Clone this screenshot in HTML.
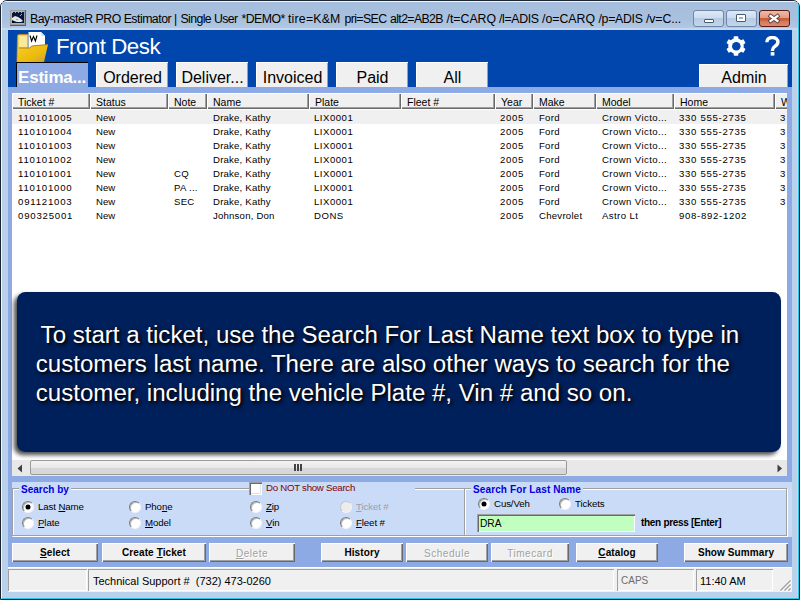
<!DOCTYPE html>
<html><head><meta charset="utf-8">
<style>
*{box-sizing:border-box;margin:0;padding:0}
html,body{width:800px;height:600px;overflow:hidden;background:#fff}
body{position:relative;font-family:"Liberation Sans",sans-serif;font-size:11px;color:#000}
.a{position:absolute}
.u{text-decoration:underline}
.tb{position:absolute;top:62px;height:25px;background:#f0f0f0;border-top:1px solid #fff;border-left:1px solid #fff;box-shadow:inset -1px 0 0 #a0a0a0;font-size:16px;line-height:24px;text-align:center;white-space:nowrap;color:#000}
.tbt{position:absolute;top:66px;font-size:16px;line-height:20px;white-space:nowrap;color:#000}
.hc{position:absolute;top:0;height:16px;background:#f0f0f0;box-shadow:inset 1px 1px 0 #fff,inset -1px -1px 0 #696969,inset -2px -2px 0 #a0a0a0;font-size:10.5px;line-height:16px;padding-top:1px;padding-left:6px;white-space:nowrap;overflow:hidden}
.c{position:absolute;font-size:9.6px;line-height:15px;white-space:nowrap}
.gb{position:absolute;border:1px solid #a0a0a0;box-shadow:1px 1px 0 #fff, inset 1px 1px 0 #fff}
.rd{position:absolute;width:12px;height:12px;border-radius:50%;background:#fff;border:1px solid;border-color:#7c7c7c #f4f4f4 #f4f4f4 #7c7c7c;box-shadow:inset 1px 1px 0 #b8b8b8}
.rd.on::after{content:"";position:absolute;left:3px;top:3px;width:4px;height:4px;border-radius:50%;background:#000;box-shadow:0 0 0 0.5px #000}
.rd.dis{background:#ececec;border-color:#c4c4c4 #f4f4f4 #f4f4f4 #c4c4c4;box-shadow:none}
.lb{position:absolute;font-size:9.7px;line-height:14px;white-space:nowrap;letter-spacing:-0.12px}
.btn{position:absolute;top:543px;height:19px;background:#f0f0f0;box-shadow:inset 1px 1px 0 #fff,inset -1px -1px 0 #696969,inset -2px -2px 0 #a0a0a0;font-size:10px;line-height:19px;text-align:center;font-weight:bold;white-space:nowrap;letter-spacing:0.1px}
.btn.dis{color:#a0a0a0;font-weight:normal;font-size:10px;letter-spacing:0.55px;line-height:19px;padding-top:1px;text-shadow:1px 1px 0 #fff}
.sp{position:absolute;top:569px;height:22px;box-shadow:inset 1px 1px 0 #a0a0a0,inset -1px -1px 0 #fff}
.st{position:absolute;top:574px;font-size:11px;line-height:14px;white-space:nowrap}
</style></head><body>
<div class="a" style="left:0;top:0;width:800px;height:600px;background:#b9d1ea;border:1px solid #1c2430;border-radius:7px 7px 0 0"></div>
<div class="a" style="left:1px;top:1px;width:798px;height:598px;border-top:1px solid #f2f6fb;border-left:1px solid #f2f6fb;border-right:1px solid #2ec6e6;border-bottom:1px solid #2ec6e6;border-radius:6px 6px 0 0"></div>
<div class="a" style="left:2px;top:2px;width:796px;height:26px;background:linear-gradient(#a6bedd,#a9c1df 70%,#b2c8e4)"></div>
<div class="a" style="left:2px;top:28px;width:796px;height:2px;background:#c6d8ee"></div>
<div class="a" style="left:797px;top:30px;width:1px;height:567px;background:#ccd6ee"></div>
<svg class="a" style="left:10px;top:10px" width="16" height="16" viewBox="0 0 16 16" shape-rendering="crispEdges">
<rect x="0" y="0" width="16" height="16" fill="#5e5e5e"/>
<rect x="0" y="0" width="15" height="15" fill="#9c9c9c"/>
<rect x="1" y="1" width="13" height="13" fill="#b4b4b4"/>
<rect x="2" y="3" width="12" height="10" fill="#06163c"/>
<rect x="3" y="2" width="2" height="1" fill="#06163c"/><rect x="6" y="2" width="2" height="1" fill="#06163c"/><rect x="9" y="2" width="2" height="1" fill="#06163c"/><rect x="12" y="2" width="2" height="1" fill="#06163c"/>
<path d="M2 8 L5 6 L8 7 L11 9 L13 11 L11 12 L7 12 L4 11 L2 10Z" fill="#e6e6e6" shape-rendering="auto"/>
<rect x="6" y="9" width="2" height="1" fill="#70c070"/>
<rect x="10" y="5" width="1" height="1" fill="#e0a020"/><rect x="11" y="4" width="1" height="1" fill="#e0a020"/>
<rect x="2" y="11" width="2" height="2" fill="#000"/>
</svg>
<style>.tt{position:absolute;top:11px;font-size:12.3px;line-height:16px;white-space:pre;color:#000}</style>
<div class="tt" style="left:30px;letter-spacing:-0.5px">Bay-masteR PRO Estimator |</div>
<div class="tt" style="left:180.5px;letter-spacing:-0.6px">Single User</div>
<div class="tt" style="left:241.5px;letter-spacing:-0.55px">*DEMO*</div>
<div class="tt" style="left:288px;letter-spacing:0.2px">tire=K&amp;M</div>
<div class="tt" style="left:344.5px;letter-spacing:-0.6px">pri=SEC</div>
<div class="tt" style="left:390px;letter-spacing:-0.62px">alt2=AB2B</div>
<div class="tt" style="left:446.5px;letter-spacing:0px">/t=CARQ</div>
<div class="tt" style="left:499px;letter-spacing:-0.35px">/l=ADIS</div>
<div class="tt" style="left:542px;letter-spacing:0px">/o=CARQ</div>
<div class="tt" style="left:598.5px;letter-spacing:-0.3px">/p=ADIS</div>
<div class="tt" style="left:646px;letter-spacing:-0.12px">/v=C...</div>

<div class="a" style="left:693px;top:10px;width:31px;height:17px;border:1px solid #6f86a6;border-radius:3px;background:linear-gradient(#dfe9f5,#cddcee 45%,#b6cbe4 50%,#c2d5ea)"></div>
<div class="a" style="left:704px;top:19px;width:10px;height:4px;background:#fff;border:1px solid #4a5a70;border-radius:1px"></div>
<div class="a" style="left:726px;top:10px;width:31px;height:17px;border:1px solid #6f86a6;border-radius:3px;background:linear-gradient(#dfe9f5,#cddcee 45%,#b6cbe4 50%,#c2d5ea)"></div>
<div class="a" style="left:736px;top:14px;width:10px;height:8px;background:#fff;border:1px solid #4a5a70;border-radius:1px"></div>
<div class="a" style="left:739px;top:17px;width:4px;height:2px;background:#9ab0cc"></div>
<div class="a" style="left:759px;top:10px;width:31px;height:17px;border:1px solid #5a1a14;border-radius:3px;background:linear-gradient(#f2b8a8,#e49a86 45%,#c85e34 50%,#c8623c 62%,#d4785c 70%,#dc8a70)"></div>
<svg class="a" style="left:767px;top:13px" width="14" height="11" viewBox="0 0 14 11">
<path d="M3.5 3 L10.5 8 M10.5 3 L3.5 8" stroke="#5a4040" stroke-width="4" stroke-linecap="square"/>
<path d="M3.5 3 L10.5 8 M10.5 3 L3.5 8" stroke="#fff" stroke-width="2.2" stroke-linecap="square"/>
</svg>
<div class="a" style="left:8px;top:30px;width:784px;height:57px;background:#0046ad"></div>
<svg class="a" style="left:16px;top:31px" width="34" height="32" viewBox="0 0 34 32">
<defs><linearGradient id="fl" x1="0" y1="0" x2="1" y2="1"><stop offset="0" stop-color="#f6cc2a"/><stop offset="0.6" stop-color="#eebb0c"/><stop offset="1" stop-color="#c9a040"/></linearGradient></defs>
<path d="M1.5 4.5 L3 3.5 L12 3.5 L12 31 L1 31 Z" fill="#f0cf50" stroke="#d09020" stroke-width="0.8"/>
<path d="M3 5 L11 5 L11 16 L3 16Z" fill="#fbe89a"/>
<path d="M12.5 1 L25 1 L29 5 L29 18 L12.5 18Z" fill="#fff"/>
<path d="M25 1 L25 5 L29 5Z" fill="#cfe8f8"/>
<path d="M14 4.5 L15.6 10 L17.5 5.5 L19.4 10 L21 4.5" stroke="#000" stroke-width="1.1" fill="none"/>
<path d="M3 17 L14 17 L15.5 15 L32 13.5 L28 31 L1.5 31Z" fill="url(#fl)"/>
<path d="M3 17 L14 17 L15.5 15 L32 13.5" stroke="#b07818" stroke-width="0.9" fill="none"/>
</svg>
<div class="a" style="left:56px;top:35px;font-size:22.3px;line-height:24px;color:#fff;white-space:nowrap;letter-spacing:-0.5px">Front Desk</div>
<svg class="a" style="left:726px;top:36px" width="20" height="20" viewBox="0 0 20 20">
<g fill="#fff" transform="translate(10,10)">
<circle r="7.8"/>
<rect x="-2.3" y="-9.8" width="4.6" height="19.6" rx="0.8"/>
<rect x="-2.3" y="-9.8" width="4.6" height="19.6" rx="0.8" transform="rotate(60)"/>
<rect x="-2.3" y="-9.8" width="4.6" height="19.6" rx="0.8" transform="rotate(120)"/>
</g>
<circle cx="10.3" cy="10.3" r="4.3" fill="#0046ad"/>
</svg>
<svg class="a" style="left:765px;top:36px" width="15" height="20" viewBox="0 0 15 20">
<path d="M1.8 6.2 C1.8 2.9 4.2 1.5 7.3 1.5 C10.6 1.5 12.9 3.3 12.9 6 C12.9 8.4 11.4 9.5 9.6 10.7 C8.1 11.7 7.5 12.5 7.5 14.2 L7.5 15" stroke="#fff" stroke-width="3.4" fill="none"/>
<rect x="5.7" y="16.1" width="3.7" height="3.5" fill="#fff"/>
</svg>
<div class="a" style="left:8px;top:87px;width:784px;height:480px;background:#8eaae4"></div>
<div class="a" style="left:16px;top:62px;width:72px;height:25px;background:#8eaae4;border-top:1px solid #000;border-left:1px solid #000"></div>
<div class="a" style="left:18px;top:68px;font-size:17px;line-height:20px;font-weight:bold;color:#fff;white-space:nowrap;letter-spacing:-0.2px">Estima...</div>
<div class="tb" style="left:96px;width:72px;top:62px;height:25px;line-height:24px;padding-top:3px">Ordered</div>
<div class="tb" style="left:176px;width:72px;top:62px;height:25px;line-height:24px;padding-top:3px">Deliver...</div>
<div class="tb" style="left:256px;width:72px;top:62px;height:25px;line-height:24px;padding-top:3px">Invoiced</div>
<div class="tb" style="left:336px;width:72px;top:62px;height:25px;line-height:24px;padding-top:3px">Paid</div>
<div class="tb" style="left:416px;width:72px;top:62px;height:25px;line-height:24px;padding-top:3px">All</div>
<div class="tb" style="left:699px;width:89px;top:64px;height:23px;line-height:22px;padding-top:2px">Admin</div>
<div class="a" style="left:12px;top:93px;width:775px;height:383px;background:#fff;overflow:hidden">
<div class="hc" style="left:0px;width:78px">Ticket #</div>
<div class="hc" style="left:78px;width:78px">Status</div>
<div class="hc" style="left:156px;width:39px">Note</div>
<div class="hc" style="left:195px;width:102px">Name</div>
<div class="hc" style="left:297px;width:92px">Plate</div>
<div class="hc" style="left:389px;width:94px">Fleet #</div>
<div class="hc" style="left:483px;width:38px">Year</div>
<div class="hc" style="left:521px;width:63px">Make</div>
<div class="hc" style="left:584px;width:78px">Model</div>
<div class="hc" style="left:662px;width:101px">Home</div>
<div class="hc" style="left:763px;width:85px">Work</div>
<div class="a" style="left:0;top:17px;width:775px;height:14px;background:#f0f0f0"></div>
<div class="c" style="left:6px;top:17px;letter-spacing:0.8px">110101005</div>
<div class="c" style="left:84px;top:17px;letter-spacing:0.05px">New</div>
<div class="c" style="left:201px;top:17px;letter-spacing:0.2px">Drake, Kathy</div>
<div class="c" style="left:302px;top:17px;letter-spacing:0.5px">LIX0001</div>
<div class="c" style="left:488px;top:17px;letter-spacing:0.7px">2005</div>
<div class="c" style="left:527px;top:17px;letter-spacing:0.25px">Ford</div>
<div class="c" style="left:590px;top:17px;letter-spacing:0.4px">Crown Victo...</div>
<div class="c" style="left:667px;top:17px;letter-spacing:0.7px">330 555-2735</div>
<div class="c" style="left:768px;top:17px;letter-spacing:0.7px">3</div>
<div class="c" style="left:6px;top:31px;letter-spacing:0.8px">110101004</div>
<div class="c" style="left:84px;top:31px;letter-spacing:0.05px">New</div>
<div class="c" style="left:201px;top:31px;letter-spacing:0.2px">Drake, Kathy</div>
<div class="c" style="left:302px;top:31px;letter-spacing:0.5px">LIX0001</div>
<div class="c" style="left:488px;top:31px;letter-spacing:0.7px">2005</div>
<div class="c" style="left:527px;top:31px;letter-spacing:0.25px">Ford</div>
<div class="c" style="left:590px;top:31px;letter-spacing:0.4px">Crown Victo...</div>
<div class="c" style="left:667px;top:31px;letter-spacing:0.7px">330 555-2735</div>
<div class="c" style="left:768px;top:31px;letter-spacing:0.7px">3</div>
<div class="c" style="left:6px;top:45px;letter-spacing:0.8px">110101003</div>
<div class="c" style="left:84px;top:45px;letter-spacing:0.05px">New</div>
<div class="c" style="left:201px;top:45px;letter-spacing:0.2px">Drake, Kathy</div>
<div class="c" style="left:302px;top:45px;letter-spacing:0.5px">LIX0001</div>
<div class="c" style="left:488px;top:45px;letter-spacing:0.7px">2005</div>
<div class="c" style="left:527px;top:45px;letter-spacing:0.25px">Ford</div>
<div class="c" style="left:590px;top:45px;letter-spacing:0.4px">Crown Victo...</div>
<div class="c" style="left:667px;top:45px;letter-spacing:0.7px">330 555-2735</div>
<div class="c" style="left:768px;top:45px;letter-spacing:0.7px">3</div>
<div class="c" style="left:6px;top:59px;letter-spacing:0.8px">110101002</div>
<div class="c" style="left:84px;top:59px;letter-spacing:0.05px">New</div>
<div class="c" style="left:201px;top:59px;letter-spacing:0.2px">Drake, Kathy</div>
<div class="c" style="left:302px;top:59px;letter-spacing:0.5px">LIX0001</div>
<div class="c" style="left:488px;top:59px;letter-spacing:0.7px">2005</div>
<div class="c" style="left:527px;top:59px;letter-spacing:0.25px">Ford</div>
<div class="c" style="left:590px;top:59px;letter-spacing:0.4px">Crown Victo...</div>
<div class="c" style="left:667px;top:59px;letter-spacing:0.7px">330 555-2735</div>
<div class="c" style="left:768px;top:59px;letter-spacing:0.7px">3</div>
<div class="c" style="left:6px;top:73px;letter-spacing:0.8px">110101001</div>
<div class="c" style="left:84px;top:73px;letter-spacing:0.05px">New</div>
<div class="c" style="left:162px;top:73px;letter-spacing:0.25px">CQ</div>
<div class="c" style="left:201px;top:73px;letter-spacing:0.2px">Drake, Kathy</div>
<div class="c" style="left:302px;top:73px;letter-spacing:0.5px">LIX0001</div>
<div class="c" style="left:488px;top:73px;letter-spacing:0.7px">2005</div>
<div class="c" style="left:527px;top:73px;letter-spacing:0.25px">Ford</div>
<div class="c" style="left:590px;top:73px;letter-spacing:0.4px">Crown Victo...</div>
<div class="c" style="left:667px;top:73px;letter-spacing:0.7px">330 555-2735</div>
<div class="c" style="left:768px;top:73px;letter-spacing:0.7px">3</div>
<div class="c" style="left:6px;top:87px;letter-spacing:0.8px">110101000</div>
<div class="c" style="left:84px;top:87px;letter-spacing:0.05px">New</div>
<div class="c" style="left:162px;top:87px;letter-spacing:0.25px">PA ...</div>
<div class="c" style="left:201px;top:87px;letter-spacing:0.2px">Drake, Kathy</div>
<div class="c" style="left:302px;top:87px;letter-spacing:0.5px">LIX0001</div>
<div class="c" style="left:488px;top:87px;letter-spacing:0.7px">2005</div>
<div class="c" style="left:527px;top:87px;letter-spacing:0.25px">Ford</div>
<div class="c" style="left:590px;top:87px;letter-spacing:0.4px">Crown Victo...</div>
<div class="c" style="left:667px;top:87px;letter-spacing:0.7px">330 555-2735</div>
<div class="c" style="left:768px;top:87px;letter-spacing:0.7px">3</div>
<div class="c" style="left:6px;top:101px;letter-spacing:0.8px">091121003</div>
<div class="c" style="left:84px;top:101px;letter-spacing:0.05px">New</div>
<div class="c" style="left:162px;top:101px;letter-spacing:0.25px">SEC</div>
<div class="c" style="left:201px;top:101px;letter-spacing:0.2px">Drake, Kathy</div>
<div class="c" style="left:302px;top:101px;letter-spacing:0.5px">LIX0001</div>
<div class="c" style="left:488px;top:101px;letter-spacing:0.7px">2005</div>
<div class="c" style="left:527px;top:101px;letter-spacing:0.25px">Ford</div>
<div class="c" style="left:590px;top:101px;letter-spacing:0.4px">Crown Victo...</div>
<div class="c" style="left:667px;top:101px;letter-spacing:0.7px">330 555-2735</div>
<div class="c" style="left:768px;top:101px;letter-spacing:0.7px">3</div>
<div class="c" style="left:6px;top:115px;letter-spacing:0.8px">090325001</div>
<div class="c" style="left:84px;top:115px;letter-spacing:0.05px">New</div>
<div class="c" style="left:201px;top:115px;letter-spacing:0.2px">Johnson, Don</div>
<div class="c" style="left:302px;top:115px;letter-spacing:0.5px">DONS</div>
<div class="c" style="left:488px;top:115px;letter-spacing:0.7px">2005</div>
<div class="c" style="left:527px;top:115px;letter-spacing:0.25px">Chevrolet</div>
<div class="c" style="left:590px;top:115px;letter-spacing:0.4px">Astro Lt</div>
<div class="c" style="left:667px;top:115px;letter-spacing:0.7px">908-892-1202</div>
<div class="a" style="left:0;top:367px;width:775px;height:16px;background:#e8e8e8"></div>
<svg class="a" style="left:4px;top:371px" width="8" height="9" viewBox="0 0 8 9"><path d="M6 0.5 L1.5 4.5 L6 8.5Z" fill="#404040"/></svg>
<svg class="a" style="left:764px;top:371px" width="8" height="9" viewBox="0 0 8 9"><path d="M1.5 0.5 L6 4.5 L1.5 8.5Z" fill="#404040"/></svg>
<div class="a" style="left:18px;top:367px;width:537px;height:15px;border:1px solid #9a9a9a;border-radius:2px;background:linear-gradient(#f4f4f4,#e8e8e8 50%,#d6d6d6 51%,#d8d8d8)"></div>
<div class="a" style="left:282px;top:371px;width:1.5px;height:7px;background:#444;box-shadow:3px 0 0 #444,6px 0 0 #444"></div>
</div>
<div class="a" style="left:17px;top:292px;width:764px;height:160px;background:#00205b;border-radius:8.5px;box-shadow:-3px 3px 4px rgba(0,0,0,0.7)"></div>
<style>.msg{position:absolute;font-size:24.08px;line-height:29px;color:#fff;white-space:pre;text-shadow:2px 2px 4px #000,1px 1px 2px rgba(0,0,0,0.6)}</style>
<div class="msg" style="left:40.6px;top:320px">To start a ticket, use the Search For Last Name text box to type in</div>
<div class="msg" style="left:35.8px;top:349px">customers last name. There are also other ways to search for the</div>
<div class="msg" style="left:35.8px;top:378px">customer, including the vehicle Plate #, Vin # and so on.</div>
<div class="a" style="left:12px;top:482px;width:780px;height:55px;background:#cadbf8"></div>
<div class="gb" style="left:12px;top:488px;width:453px;height:48px"></div>
<div class="a" style="left:19px;top:482px;width:52px;height:14px;background:#cadbf8"></div>
<div class="lb" style="left:21px;top:483px;color:#0000e0;font-weight:bold;letter-spacing:0;font-size:10px">Search by</div>
<div class="a" style="left:249px;top:482px;width:166px;height:14px;background:#cadbf8"></div>
<div class="a" style="left:249px;top:482px;width:13px;height:13px;background:#fff;box-shadow:inset 1px 1px 0 #a0a0a0,inset 2px 2px 0 #696969,inset -1px -1px 0 #fff,inset -2px -2px 0 #e3e3e3"></div>
<div class="lb" style="left:266px;top:481px;color:#800000;letter-spacing:-0.28px">Do NOT show Search</div>
<div class="rd on" style="left:22px;top:501px"></div><div class="lb" style="left:38px;top:500px">Last <span class="u">N</span>ame</div>
<div class="rd" style="left:22px;top:517px"></div><div class="lb" style="left:38px;top:516px"><span class="u">P</span>late</div>
<div class="rd" style="left:129px;top:501px"></div><div class="lb" style="left:145px;top:500px">Pho<span class="u">n</span>e</div>
<div class="rd" style="left:129px;top:517px"></div><div class="lb" style="left:145px;top:516px"><span class="u">M</span>odel</div>
<div class="rd" style="left:250px;top:501px"></div><div class="lb" style="left:266px;top:500px"><span class="u">Z</span>ip</div>
<div class="rd" style="left:250px;top:517px"></div><div class="lb" style="left:266px;top:516px"><span class="u">V</span>in</div>
<div class="rd dis" style="left:340px;top:501px"></div><div class="lb" style="left:356px;top:500px;color:#a0a0a0"><span class="u">T</span>icket #</div>
<div class="rd" style="left:340px;top:517px"></div><div class="lb" style="left:356px;top:516px"><span class="u">F</span>leet #</div>
<div class="gb" style="left:464px;top:488px;width:323px;height:48px"></div>
<div class="a" style="left:471px;top:482px;width:112px;height:14px;background:#cadbf8"></div>
<div class="lb" style="left:473px;top:483px;color:#0000e0;font-weight:bold;letter-spacing:0.12px;font-size:10px">Search For Last Name</div>
<div class="rd on" style="left:478px;top:498px"></div><div class="lb" style="left:494px;top:497px">Cus/Veh</div>
<div class="rd" style="left:559px;top:498px"></div><div class="lb" style="left:575px;top:497px">Tickets</div>
<div class="a" style="left:477px;top:514px;width:158px;height:18px;background:#c0ffc0;box-shadow:inset 1px 1px 0 #a0a0a0,inset 2px 2px 0 #696969,inset -1px -1px 0 #fff"></div>
<div class="lb" style="left:480px;top:517px;font-size:10.2px;letter-spacing:0">DRA</div>
<div class="lb" style="left:641px;top:516px;font-weight:bold;letter-spacing:-0.3px;font-size:10px">then press [Enter]</div>
<div class="btn " style="left:12px;width:86px"><span class="u">S</span>elect</div>
<div class="btn " style="left:102px;width:104px">Create <span class="u">T</span>icket</div>
<div class="btn dis" style="left:209px;width:86px"><span class="u">D</span>elete</div>
<div class="btn " style="left:321px;width:82px">History</div>
<div class="btn dis" style="left:406px;width:82px">Schedule</div>
<div class="btn dis" style="left:491px;width:78px">Timecard</div>
<div class="btn " style="left:576px;width:82px"><span class="u">C</span>atalog</div>
<div class="btn " style="left:684px;width:104px">Show Summary</div>
<div class="a" style="left:8px;top:567px;width:784px;height:25px;background:#f0f0f0;border-top:1px solid #fff"></div>
<div class="sp" style="left:8px;width:79px"></div>
<div class="sp" style="left:88px;width:526px"></div>
<div class="st" style="left:93px">Technical Support #&nbsp; (732) 473-0260</div>
<div class="sp" style="left:617px;width:77px"></div>
<div class="st" style="left:621px;font-size:10px;color:#6d6d6d">CAPS</div>
<div class="sp" style="left:696px;width:77px"></div>
<div class="st" style="left:700px">11:40 AM</div>
<svg class="a" style="left:778px;top:578px" width="14" height="14" viewBox="0 0 14 14">
<path d="M2.5 12.5 L12.5 2.5 M6.5 12.5 L12.5 6.5 M10.5 12.5 L12.5 10.5" stroke="#a0a0a0" stroke-width="1.4"/>
<path d="M3.5 13.5 L13.5 3.5 M7.5 13.5 L13.5 7.5 M11.5 13.5 L13.5 11.5" stroke="#fff" stroke-width="1"/>
</svg>
</body></html>
